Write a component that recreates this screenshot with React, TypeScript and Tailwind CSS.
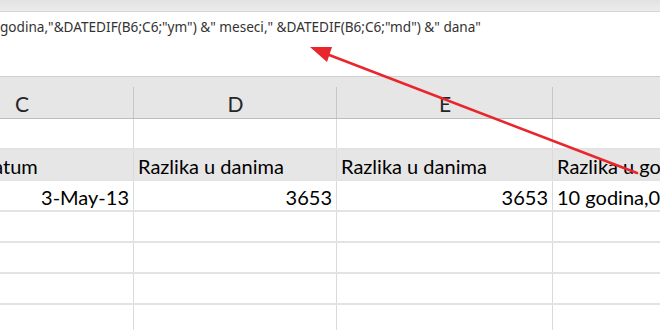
import React from 'react'

const cols = [
  { w: 'w-[224px]', letter: 'C' },
  { w: 'w-[203px]', letter: 'D' },
  { w: 'w-[216px]', letter: 'E' },
  { w: 'w-[260px]', letter: 'F' },
]

const rows: { cells: string[]; gray?: boolean; align?: ('l' | 'r')[] }[] = [
  { cells: ['', '', '', ''] },
  { cells: ['Krajnji datum', 'Razlika u danima', 'Razlika u danima', 'Razlika u godinama'], gray: true },
  { cells: ['3-May-13', '3653', '3653', '10 godina,0 meseci'], align: ['r', 'r', 'r', 'l'] },
  { cells: ['', '', '', ''] },
  { cells: ['', '', '', ''] },
  { cells: ['', '', '', ''] },
  { cells: ['', '', '', ''] },
]

const App: React.FC = () => {
  return (
    <div className="relative w-[660px] h-[330px] overflow-hidden bg-white">
      {/* ribbon edge */}
      <div className="h-[12px] bg-gradient-to-b from-[#e2e2e2] to-[#ececec] border-b border-[#d6d6d6]" />

      {/* formula bar */}
      <div className="h-[65px] bg-white border-b border-[#cfcfcf] pt-[5px] whitespace-nowrap text-[13.6px] leading-[20px] text-[#333] font-['Noto_Sans',sans-serif]">
        godina,"&amp;DATEDIF(B6;C6;"ym") &amp;" meseci," &amp;DATEDIF(B6;C6;"md") &amp;" dana"
      </div>

      <div className="-ml-[90px] font-['Lato',sans-serif]">
        {/* column headers */}
        <div className="flex h-[42px] bg-[#e6e6e6] border-b border-[#bdbdbd]">
          {cols.map((c) => (
            <div key={c.letter} className={`${c.w} shrink-0 relative flex items-end justify-center pb-[4px] text-[21px] leading-[21px] text-[#262626]`}>
              {c.letter}
              <span className="absolute right-0 top-[10px] bottom-0 w-px bg-[#c6c6c6]" />
            </div>
          ))}
        </div>

        {rows.map((r, i) => (
          <div key={i} className={`flex h-[31px] border-b-2 border-[#e3e3e3] ${r.gray ? 'bg-[#e7e6e6]' : 'bg-white'}`}>
            {cols.map((c, j) => (
              <div
                key={c.letter}
                className={`${c.w} shrink-0 flex items-end pb-[3px] pr-[4px] ${j === 0 ? 'pl-[11px]' : 'pl-[4px]'} text-[20px] leading-[20px] text-black whitespace-nowrap overflow-hidden border-r border-[#dadada] ${
                  r.align && r.align[j] === 'r' ? 'justify-end' : 'justify-start'
                }`}
              >
                {r.cells[j]}
              </div>
            ))}
          </div>
        ))}
      </div>

      {/* red arrow */}
      <svg className="absolute inset-0 pointer-events-none" width="660" height="330" viewBox="0 0 660 330">
        <line x1="637" y1="173" x2="324" y2="53" stroke="#e8262b" strokeWidth="2.6" strokeLinecap="round" />
        <polygon points="310,47 332,47 327,62" fill="#e8262b" />
      </svg>
    </div>
  )
}

export default App
